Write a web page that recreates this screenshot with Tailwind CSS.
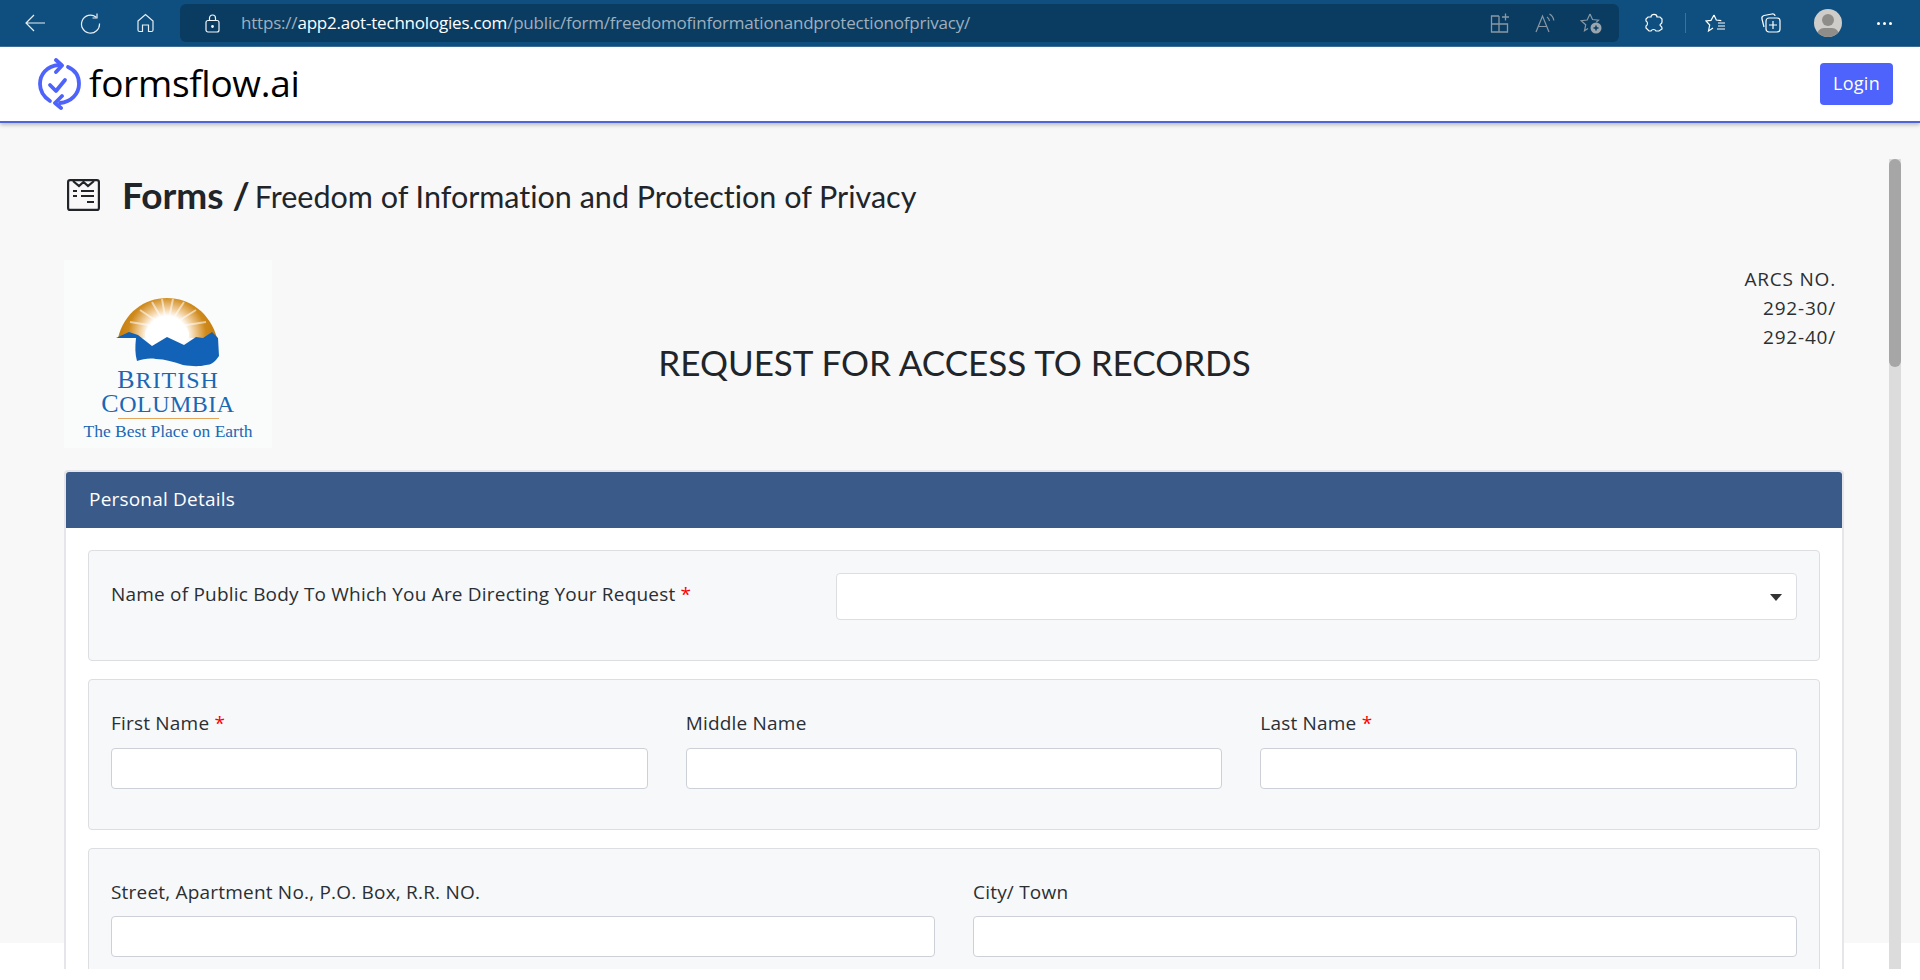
<!DOCTYPE html>
<html lang="en">

<head>
  <meta charset="UTF-8">
  <meta name="viewport" content="width=device-width, initial-scale=1.0">
  <script src="https://cdn.jsdelivr.net/npm/@tailwindcss/browser@4"></script>
  <title>formsflow.ai</title>
</head>

<body class="h-[980px] overflow-hidden bg-white font-['Lato',sans-serif] [font-variant-ligatures:none]">

  <!-- browser toolbar -->
  <div class="flex h-[47px] items-center bg-[#0f4f7f] border-b border-[#3f7099]">
    <div class="flex items-center w-[180px]">
      <svg class="ml-[24px]" width="22" height="20" viewBox="0 0 22 20" fill="none" stroke="#e8eef3" stroke-width="1.2"><path d="M21 10H2M10 2l-8 8 8 8"/></svg>
      <svg class="ml-[34px]" width="21" height="21" viewBox="0 0 21 21" fill="none" stroke="#e8eef3" stroke-width="1.2"><path d="M16 4A9 9 0 1 0 19.500 10.500M17 .5v4.500h-4.500"/></svg>
      <svg class="ml-[35px]" width="19" height="20" viewBox="0 0 19 20" fill="none" stroke="#e8eef3" stroke-width="1.2"><path d="M2 8l7.500-6.500L17 8v9a1.500 1.500 0 0 1-1.500 1.500h-3V12h-6v6.500h-3A1.500 1.500 0 0 1 2 17z"/></svg>
    </div>
    <div class="flex items-center w-[1439px] h-[38px] rounded-md bg-[#0a3c62]">
      <svg class="ml-[25px]" width="15" height="19" viewBox="0 0 15 19" fill="none" stroke="#f2f5f7" stroke-width="1.2"><rect x="1" y="6.500" width="13" height="11.500" rx="2"/><path d="M4.500 6.500V4a3 3 0 0 1 6 0v2.500"/><circle cx="7.500" cy="12.500" r="0.800" fill="#fff"/></svg>
      <div class="ml-[21px] text-[17px] text-[#9fb0bd] font-['Open_Sans',sans-serif] tracking-[-0.2px]">https://<span class="text-white">app2.aot-technologies.com</span>/public/form/freedomofinformationandprotectionofprivacy/</div>
      <div class="ml-auto flex items-center gap-[25px] mr-[17px]">
        <svg width="20" height="20" viewBox="0 0 20 20" fill="none" stroke="#8a98a3" stroke-width="1.300"><path d="M9 3H1.500v16h16v-8H1.500M9 3v16M12 4h7M15.500 .5v7"/></svg>
        <svg width="20" height="20" viewBox="0 0 20 20" fill="none" stroke="#8a98a3" stroke-width="1.200"><path d="M1 19L7.500 3 14 19M3.500 13.500h8M12 4c1.500 1 2.300 2.500 2.500 4M14.500 1c2.500 1.500 4 4 4.300 6.500"/></svg>
        <svg width="22" height="22" viewBox="0 0 22 22" fill="none" stroke="#8a98a3" stroke-width="1.200"><path d="M10 2l2.500 5.500 6 .7-2.200 2M8 16.500l-3.500 2.300 1.200-6-4.500-4.100 6-.7L10 2"/><circle cx="16" cy="16" r="5.500" fill="#9aa5ad" stroke="none"/><path d="M13.500 16h5M16 13.500v5" stroke="#0a3c62" stroke-width="1.500"/></svg>
      </div>
    </div>
    <div class="flex items-center">
      <svg class="ml-[25px]" width="20" height="20" viewBox="0 0 20 20" fill="none" stroke="#fff" stroke-width="1.200"><path d="M7 4c0-3.500 6-3.500 6 0h3l2 2v3c0 2-2 2-2 3s2 1 2 3v1l-3 2h-3c-1-2-4-2-5 0H5l-3-3v-2c2-1 2-4 0-5V6l2-2z"/></svg>
      <div class="ml-[21px] w-[1px] h-[20px] bg-[#3f7099]"></div>
      <svg class="ml-[19px]" width="22" height="20" viewBox="0 0 22 20" fill="none" stroke="#fff" stroke-width="1.200"><path d="M9 2l2.300 5 5 .6M8 15l-4.500 3 1.200-6L1 8l5-.6L9 2M13 10h7M13 13h7M12 16h8"/></svg>
      <svg class="ml-[33px]" width="22" height="22" viewBox="0 0 22 22" fill="none" stroke="#fff" stroke-width="1.200"><path d="M4 15L2 7c-.4-1.500.3-3 2-3.500L12 2c1.500-.3 3 .500 3 2"/><rect x="6" y="6" width="14" height="14" rx="3"/><path d="M13 9v8M9 13h8"/></svg>
      <div class="ml-[32px] relative w-[28px] h-[28px] rounded-full bg-[#cfcdc9] overflow-hidden">
        <div class="absolute left-[8px] top-[5px] w-[12px] h-[12px] rounded-full bg-[#8f8d8a]"></div>
        <div class="absolute left-[3px] top-[19px] w-[22px] h-[14px] rounded-full bg-[#8f8d8a]"></div>
      </div>
      <div class="ml-[35px] flex gap-[3px]">
        <div class="w-[3px] h-[3px] rounded-full bg-white"></div>
        <div class="w-[3px] h-[3px] rounded-full bg-white"></div>
        <div class="w-[3px] h-[3px] rounded-full bg-white"></div>
      </div>
    </div>
  </div>

  <!-- navbar -->
  <div class="relative flex h-[76px] items-center bg-white border-b-2 border-[#4f64d8] shadow-[0_2px_4px_rgba(0,0,0,0.25)] z-10">
    <svg class="ml-[38px]" width="43" height="52" viewBox="0 0 43 52" fill="none" stroke="#4d63fb" stroke-width="3.800" stroke-linecap="round" stroke-linejoin="round">
      <path d="M21 7C8 8 2 17 2 26c0 7 4 13 10 17"/>
      <path d="M30 9c7 3 11 9 11 17 0 10-8 18-19 19"/>
      <path d="M18 2l6 5.500-6 6.500"/>
      <path d="M23 50l-6-5 7-7"/>
      <path d="M12 27l6 6 9-11"/>
    </svg>
    <div class="ml-[8px] mb-[3px] text-[37px] leading-none font-medium text-black font-['Open_Sans',sans-serif] tracking-[-0.3px]">formsflow.ai</div>
    <button class="ml-auto mr-[27px] w-[73px] h-[42px] pb-[2px] rounded-[4px] bg-[#4d63fb] text-white text-[18px] tracking-[0.3px] font-['Open_Sans',sans-serif]">Login</button>
  </div>

  <!-- page body -->
  <div class="relative h-[846px] overflow-hidden">
    <div class="absolute inset-x-0 top-0 h-[820px] bg-[#f8f8f8]"></div>
    <div class="absolute left-[1889px] top-[36px] w-[12px] h-[810px] bg-[#dcdcdc]"></div>
    <div class="absolute left-[1889px] top-[36px] w-[12px] h-[208px] rounded-full bg-[#a6a6a6]"></div>

    <div class="relative w-[1780px] ml-[64px]">
      <div class="flex items-center h-[137px] pt-[7px] text-[#212529]">
        <svg width="33" height="32" viewBox="0 0 33 32" fill="none" stroke="#212529" stroke-width="2.200" class="ml-[3px]">
          <rect x="1.100" y="1.100" width="30.800" height="29.800" rx="2"/>
          <path d="M6 2l6 5 4.500-4 4.500 4 6-5"/>
          <path d="M6 12h4M14 12h13M6 17h4M14 17h13M20 23h7"/>
        </svg>
        <div class="ml-[22px] text-[37px] font-bold">Forms /</div>
        <div class="ml-[5px] text-[30.5px] mt-[3px]">Freedom of Information and Protection of Privacy</div>
      </div>

      <div class="relative h-[210px]">
        <div class="absolute left-0 top-0 w-[208px] h-[188px] bg-[#fafbfb] flex flex-col items-center">
          <svg class="mt-[38px]" width="104" height="70" viewBox="0 0 104 70">
            <defs>
              <radialGradient id="sun" cx="51" cy="38" r="50" gradientUnits="userSpaceOnUse">
                <stop offset="0.4" stop-color="#ffffff"/>
                <stop offset="0.55" stop-color="#f2cf9d"/>
                <stop offset="0.78" stop-color="#cf8a1c"/>
                <stop offset="1" stop-color="#c47c0a"/>
              </radialGradient>
            </defs>
            <path d="M2 40C8 15 28 0 51 0s43 15 50 40z" fill="url(#sun)"/>
            <path d="M51 30L14 24M51 30L24 12M51 30L36 4M51 30L46 1M51 30L57 1M51 30L68 4M51 30L80 12M51 30L90 24" stroke="#fff" stroke-width="2" opacity="0.55"/>
            <ellipse cx="51" cy="36" rx="22" ry="14" fill="#fff"/>
            <path d="M0 40l13-6 9 3 14 11 15-9 17 8 12-8 7 1 9-6 6 6 1 18c-4 6-8 9-13 9-8 2-15 1-23 0-9-3-18-6-27-6-7-1-13 0-19 2-2-7-2-14-1-23z" fill="#1263b8"/>
          </svg>
          <div class="font-['Liberation_Serif',serif] text-[#1a68b5] text-[24px] tracking-[1px] leading-[23px]"><span class="text-[26px]">B</span>RITISH</div>
          <div class="font-['Liberation_Serif',serif] text-[#1a68b5] text-[24px] tracking-[0.5px] leading-[23px]"><span class="text-[26px]">C</span>OLUMBIA</div>
          <div class="w-[101px] h-[1px] bg-[#e3a55a] mt-[2px]"></div>
          <div class="font-['Liberation_Serif',serif] text-[#1a68b5] text-[17.500px] leading-[18px] mt-[3px]">The Best Place on Earth</div>
        </div>
        <div class="absolute inset-x-0 top-[80px] text-center text-[35px] leading-[44px] text-[#212529] pl-[1px]">REQUEST FOR ACCESS TO RECORDS</div>
        <div class="absolute right-[8px] top-[5px] text-right text-[19px] tracking-[0.8px] leading-[29px] text-[#2a2f33] font-['Open_Sans',sans-serif]">ARCS NO.<br>292-30/<br>292-40/</div>
      </div>

      <div class="rounded-[4px] border-2 border-[#e6e6ea] bg-white font-['Open_Sans',sans-serif]">
        <div class="h-[56px] px-[23px] pb-[2px] flex items-center rounded-t-[3px] bg-[#3a5a8a] text-white text-[19px] tracking-[0.2px]">Personal Details</div>
        <div class="p-[22px] flex flex-col gap-[18px]">

          <div class="h-[111px] rounded-[4px] border border-[#dcdee2] bg-[#f7f8fa] px-[22px] pt-[22px] flex text-[#2a2f33]">
            <div class="w-[725px] pt-[9px] text-[19px] tracking-[0.2px] leading-[24px]">Name of Public Body To Which You Are Directing Your Request <span class="text-[#ff0000]">*</span></div>
            <div class="relative flex-1 h-[47px] rounded-[4px] border border-[#dcdee2] bg-white">
              <div class="absolute right-[14px] top-[20px] w-0 h-0 border-x-[6px] border-x-transparent border-t-[7px] border-t-[#333]"></div>
            </div>
          </div>

          <div class="h-[151px] rounded-[4px] border border-[#dcdee2] bg-[#f7f8fa] px-[22px] pt-[31px] grid grid-cols-3 gap-[38px] text-[#2a2f33]">
            <div>
              <div class="text-[19px] tracking-[0.2px] leading-[24px]">First Name <span class="text-[#ff0000]">*</span></div>
              <div class="mt-[13px] h-[41px] rounded-[4px] border border-[#cdd0d6] bg-white"></div>
            </div>
            <div>
              <div class="text-[19px] tracking-[0.2px] leading-[24px]">Middle Name</div>
              <div class="mt-[13px] h-[41px] rounded-[4px] border border-[#cdd0d6] bg-white"></div>
            </div>
            <div>
              <div class="text-[19px] tracking-[0.2px] leading-[24px]">Last Name <span class="text-[#ff0000]">*</span></div>
              <div class="mt-[13px] h-[41px] rounded-[4px] border border-[#cdd0d6] bg-white"></div>
            </div>
          </div>

          <div class="h-[200px] rounded-[4px] border border-[#dcdee2] bg-[#f7f8fa] px-[22px] pt-[31px] grid grid-cols-2 gap-[38px] text-[#2a2f33]">
            <div>
              <div class="text-[19px] tracking-[0.2px] leading-[24px]">Street, Apartment No., P.O. Box, R.R. NO.</div>
              <div class="mt-[12px] h-[41px] rounded-[4px] border border-[#cdd0d6] bg-white"></div>
            </div>
            <div>
              <div class="text-[19px] tracking-[0.2px] leading-[24px]">City/ Town</div>
              <div class="mt-[12px] h-[41px] rounded-[4px] border border-[#cdd0d6] bg-white"></div>
            </div>
          </div>

        </div>
      </div>
    </div>
  </div>

</body>

</html>
